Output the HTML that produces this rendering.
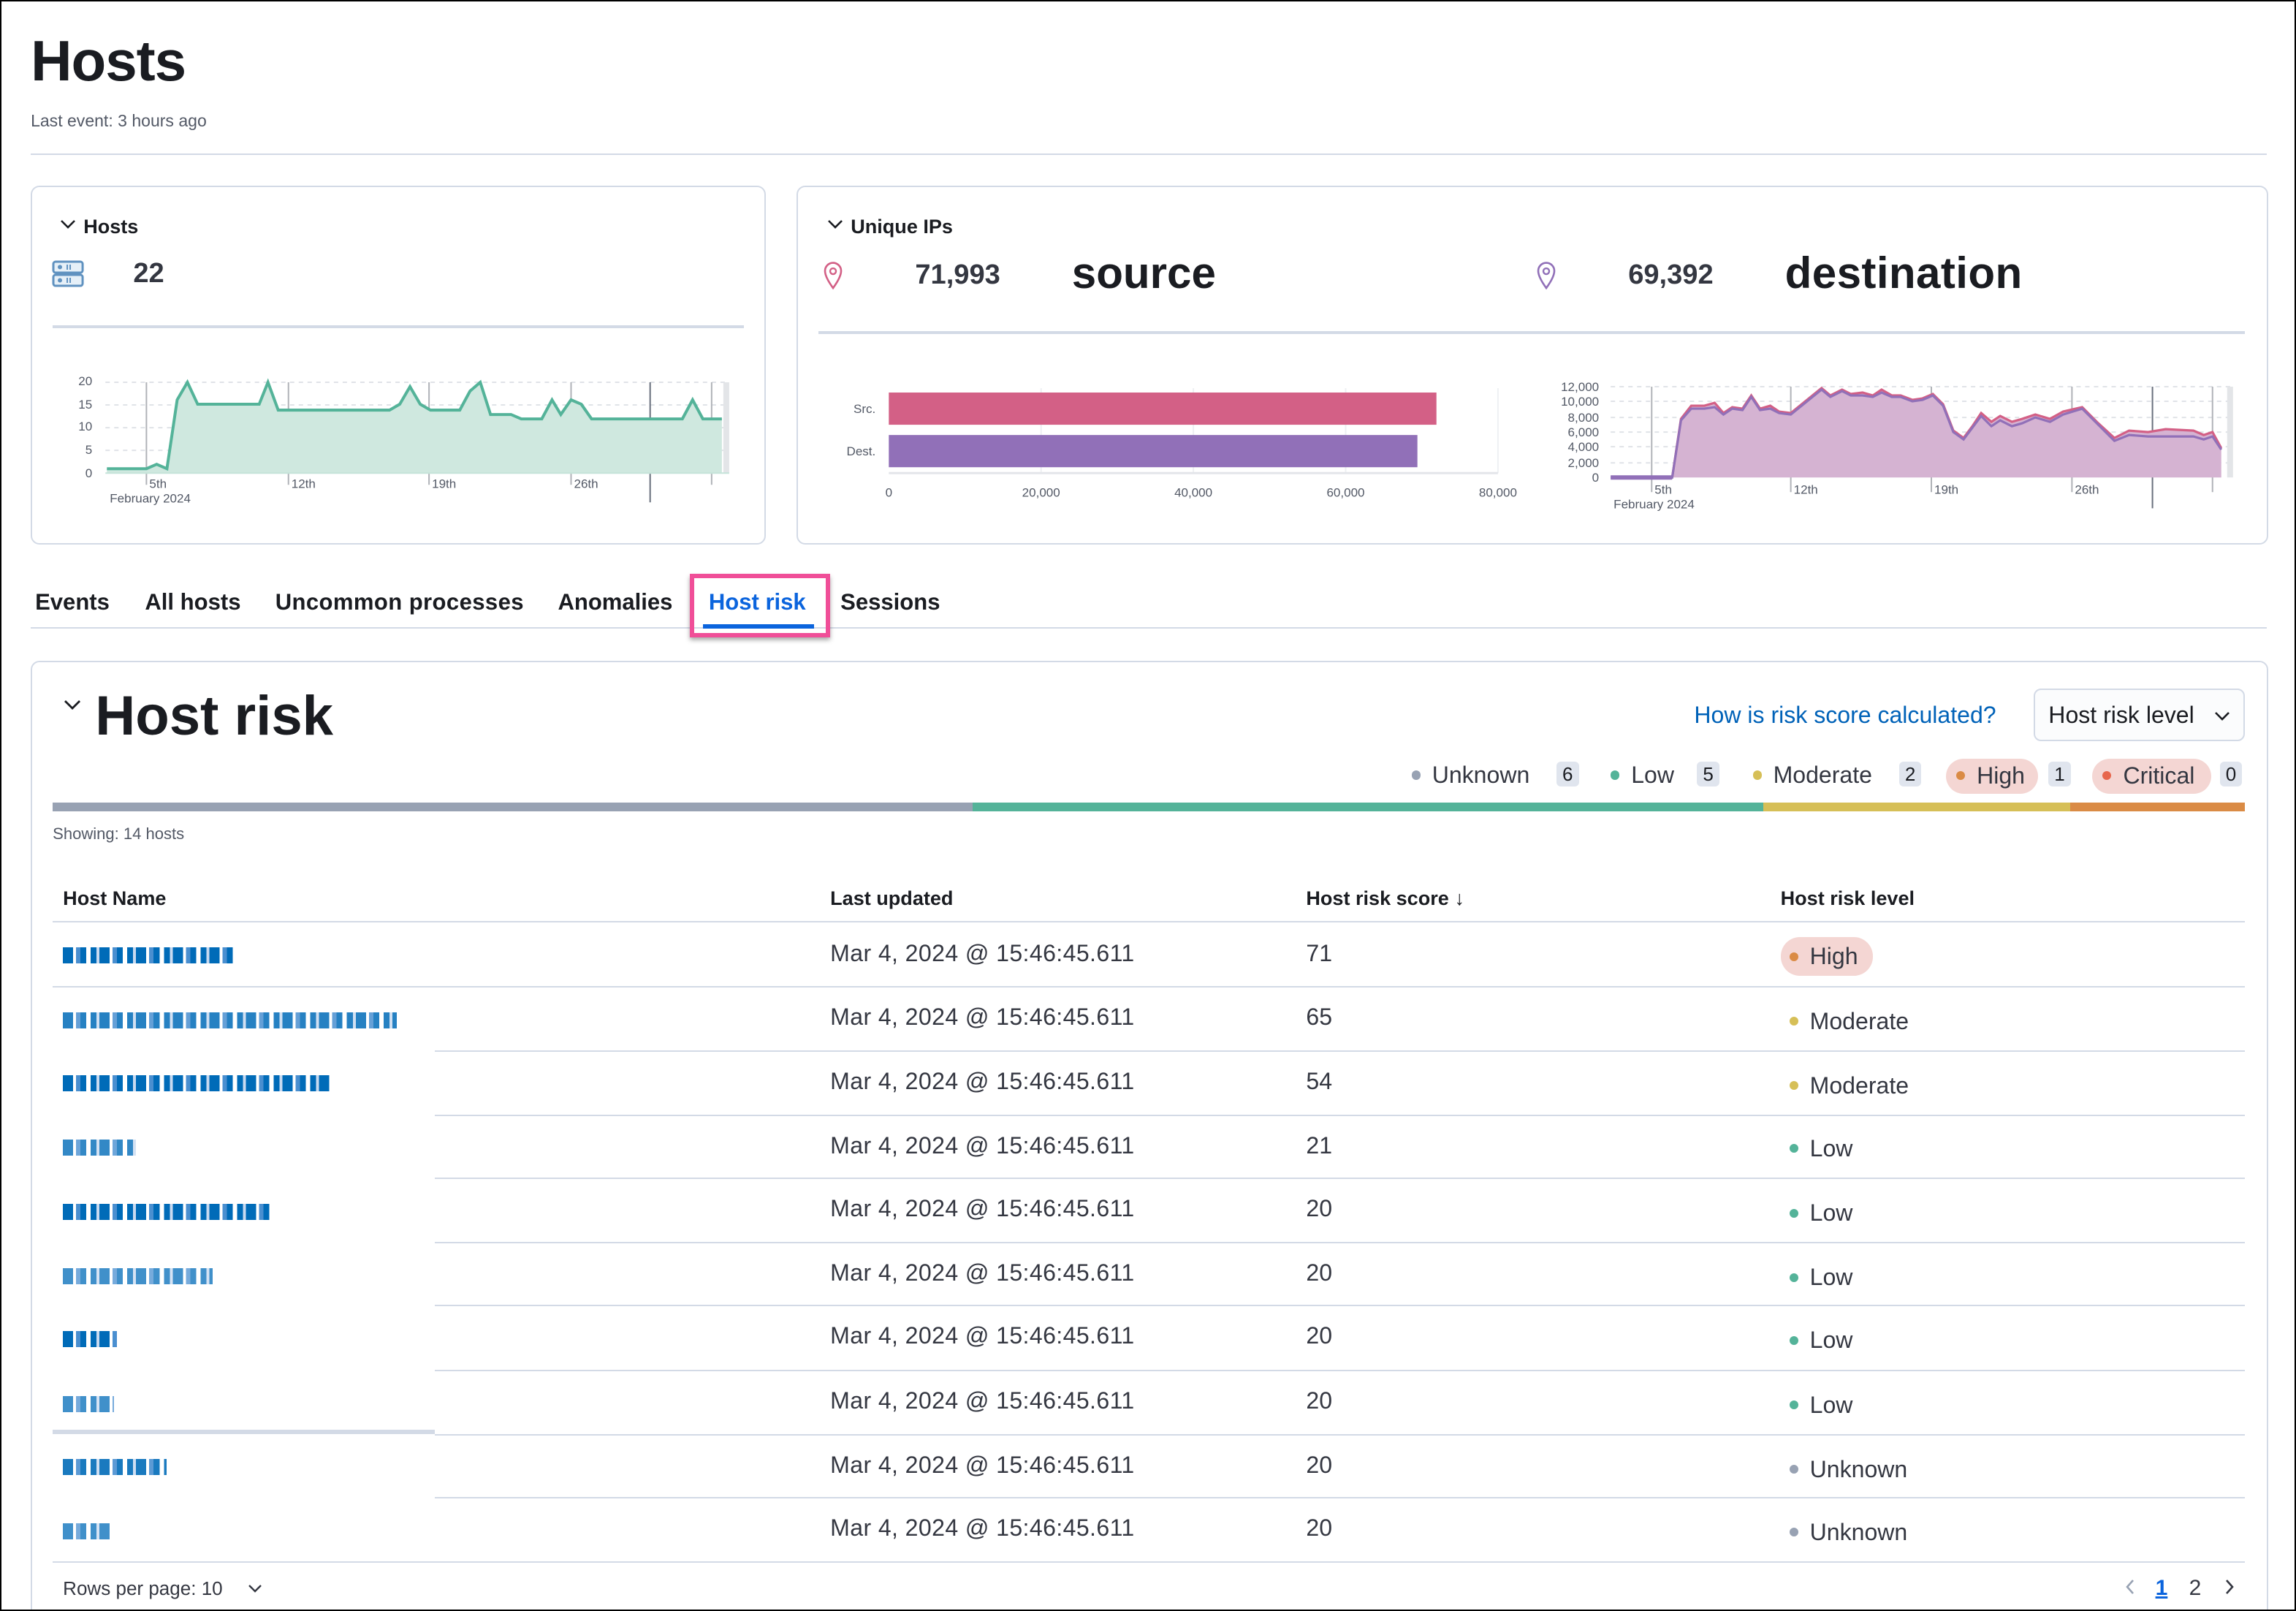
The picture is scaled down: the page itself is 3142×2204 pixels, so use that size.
<!DOCTYPE html>
<html><head><meta charset="utf-8"><style>
*{margin:0;padding:0;box-sizing:border-box}
html,body{width:3142px;height:2204px;overflow:hidden;background:#fff}
#w{position:absolute;left:0;top:0;width:1568px;height:1100px;zoom:2.0038;font-family:"Liberation Sans",sans-serif;color:#1a1c21;border:1px solid #000;background:#fff;overflow:hidden}
.a{position:absolute;white-space:nowrap}
.panel{position:absolute;border:1px solid #d3dae6;border-radius:6px;background:#fff}
.b{font-weight:bold}
.tab{position:absolute;top:401px;font-size:15.5px;font-weight:bold;color:#1a1c21}
.hl{position:absolute;height:1px;background:#d3dae6}
.dot{display:inline-block;width:6px;height:6px;border-radius:50%;margin-right:8px;vertical-align:middle;position:relative;top:-1px}
.badge{position:absolute;top:519px;height:17px;background:#e0e5ee;border-radius:3px;font-size:13px;text-align:center;line-height:17px;padding:0 4px}
.name{position:absolute;left:42px;height:11px;background:repeating-linear-gradient(90deg,#006bb8 0 7px,#fff 7px 9px,#4a8fd0 9px 12px,#006bb8 12px 16px,#fff 16px 19px,#006bb8 19px 23px,#c9daf0 23px 25px)}
</style></head><body><div id="w">
<div class="a b" style="left:20px;top:18px;font-size:39px;letter-spacing:-0.5px">Hosts</div>
<div class="a" style="left:20px;top:75px;font-size:11.5px;color:#535966">Last event: 3 hours ago</div>
<div class="hl" style="left:20px;top:104px;width:1527px"></div>

<div class="panel" style="left:20px;top:126px;width:502px;height:245px"></div>
<svg class="a" style="left:40px;top:148px" width="11" height="8" viewBox="0 0 11 8"><path d="M1 1.5L5.5 6L10 1.5" fill="none" stroke="#1a1c21" stroke-width="1.3"/></svg>
<div class="a b" style="left:56px;top:146px;font-size:13.5px">Hosts</div>
<svg class="a" style="left:34px;top:176px" width="24" height="20" viewBox="0 0 24 20"><rect x="1.5" y="1.5" width="20" height="7.5" rx="1.5" fill="#e6f0f8" stroke="#6092c0" stroke-width="1.5"/><rect x="1.5" y="10.5" width="20" height="7.5" rx="1.5" fill="#e6f0f8" stroke="#6092c0" stroke-width="1.5"/><circle cx="6" cy="5.2" r="1.5" fill="#6092c0"/><circle cx="6" cy="14.2" r="1.5" fill="#6092c0"/><path d="M11 3.5v3.5M13 3.5v3.5M11 12.5v3.5M13 12.5v3.5" stroke="#6092c0"/></svg>
<div class="a b" style="left:90px;top:175px;font-size:19px;color:#343741">22</div>
<div class="hl" style="left:35px;top:221px;width:472px;height:2px;background:#d3dae6"></div>
<svg class="a" style="left:0;top:0" width="1568" height="400">
<g stroke="#e0e3e8" stroke-dasharray="3 3" stroke-width="1"><path d="M71 260H497M71 275.5H497M71 291H497M71 306.5H497"/></g>
<g stroke="#b0b3b8"><path d="M99 260V330M196 260V330M292 260V330M389 260V330M485 260V330"/></g>
<path d="M443 260V342" stroke="#69707d"/>
<rect x="493" y="260" width="4" height="62" fill="#e3e5e8"/>
<path d="M72 319L99 319L106 316L113 319L120 272L127 260L134 275L176 275L182 260L189 279L265 279L272 275L279 263L286 275L293 279L313 279L320 266L327 260L334 282L348 282L355 285L369 285L376 272L382 282L389 272L396 275L403 285L465 285L472 272L479 285L492 285L492 322L72 322Z" fill="#cfe8df"/>
<path d="M72 319L99 319L106 316L113 319L120 272L127 260L134 275L176 275L182 260L189 279L265 279L272 275L279 263L286 275L293 279L313 279L320 266L327 260L334 282L348 282L355 285L369 285L376 272L382 282L389 272L396 275L403 285L465 285L472 272L479 285L492 285" fill="none" stroke="#54b399" stroke-width="2"/>
<path d="M71 322H497" stroke="#c5e3d9"/>
<g font-size="8.5" fill="#535966" font-family="Liberation Sans"><text x="62" y="262" text-anchor="end">20</text><text x="62" y="278" text-anchor="end">15</text><text x="62" y="293" text-anchor="end">10</text><text x="62" y="309" text-anchor="end">5</text><text x="62" y="325" text-anchor="end">0</text>
<text x="101" y="332">5th</text><text x="74" y="342">February 2024</text><text x="198" y="332">12th</text><text x="294" y="332">19th</text><text x="391" y="332">26th</text></g>

<g stroke="#eef0f3"><path d="M710 264V322M814 264V322M918 264V322M1022 264V322"/></g>
<path d="M606 322H1022" stroke="#e3e5ea" stroke-width="1.5"/>
<rect x="606" y="267" width="374" height="22" fill="#d36086"/>
<rect x="606" y="296" width="361" height="22" fill="#9170b8"/>
<g font-size="8.5" fill="#535966" font-family="Liberation Sans"><text x="597" y="281" text-anchor="end">Src.</text><text x="597" y="310" text-anchor="end">Dest.</text>
<text x="606" y="338" text-anchor="middle">0</text><text x="710" y="338" text-anchor="middle">20,000</text><text x="814" y="338" text-anchor="middle">40,000</text><text x="918" y="338" text-anchor="middle">60,000</text><text x="1022" y="338" text-anchor="middle">80,000</text></g>

<g stroke="#e0e3e8" stroke-dasharray="3 3"><path d="M1099 263H1524M1099 273H1524M1099 284H1524M1099 294H1524M1099 304H1524M1099 315H1524"/></g>
<g stroke="#b0b3b8"><path d="M1127 263V335M1222 263V335M1318 263V335M1414 263V335M1510 263V335"/></g>
<path d="M1469 263V346" stroke="#69707d"/>
<rect x="1520" y="263" width="4" height="62" fill="#e3e5e8"/>
<path d="M1099 325L1141 325L1147 285L1154 276L1163 276L1170 274L1176 281L1182 277L1189 278L1195 269L1201 278L1208 276L1214 280L1222 281L1243 264L1249 269L1257 265L1263 268L1271 267L1278 269L1284 265L1291 269L1297 269L1305 272L1312 271L1319 268L1326 275L1333 293L1340 298L1346 290L1352 281L1359 287L1365 283L1373 287L1380 285L1389 282L1399 285L1408 280L1421 277L1432 288L1443 298L1453 293L1466 294L1478 292L1497 293L1504 296L1510 294L1516 305L1516 325Z" fill="#d5b3d2"/>
<path d="M1141 325L1147 285L1154 276L1163 276L1170 274L1176 281L1182 277L1189 278L1195 269L1201 278L1208 276L1214 280L1222 281L1243 264L1249 269L1257 265L1263 268L1271 267L1278 269L1284 265L1291 269L1297 269L1305 272L1312 271L1319 268L1326 275L1333 293L1340 298L1346 290L1352 281L1359 287L1365 283L1373 287L1380 285L1389 282L1399 285L1408 280L1421 277L1432 288L1443 298L1453 293L1466 294L1478 292L1497 293L1504 296L1510 294L1516 305" fill="none" stroke="#d36086" stroke-width="1.6"/>
<path d="M1099 325L1141 325L1147 286L1154 278L1163 278L1170 277L1176 282L1182 278L1189 279L1195 270L1201 279L1208 278L1214 281L1222 282L1243 265L1249 270L1257 266L1263 269L1271 269L1278 270L1284 267L1291 270L1297 270L1305 273L1312 272L1319 269L1326 276L1333 294L1340 299L1346 291L1352 283L1359 290L1365 286L1373 290L1380 288L1389 284L1399 287L1408 282L1421 278L1432 289L1443 300L1453 296L1466 297L1478 297L1497 297L1504 299L1510 297L1516 306" fill="none" stroke="#9170b8" stroke-width="1.6"/>
<path d="M1099 325H1141" stroke="#9170b8" stroke-width="3"/>
<g font-size="8.5" fill="#535966" font-family="Liberation Sans"><text x="1091" y="266" text-anchor="end">12,000</text><text x="1091" y="276" text-anchor="end">10,000</text><text x="1091" y="287" text-anchor="end">8,000</text><text x="1091" y="297" text-anchor="end">6,000</text><text x="1091" y="307" text-anchor="end">4,000</text><text x="1091" y="318" text-anchor="end">2,000</text><text x="1091" y="328" text-anchor="end">0</text>
<text x="1129" y="336">5th</text><text x="1101" y="346">February 2024</text><text x="1224" y="336">12th</text><text x="1320" y="336">19th</text><text x="1416" y="336">26th</text></g>
</svg>

<div class="panel" style="left:543px;top:126px;width:1005px;height:245px;background:transparent"></div>
<svg class="a" style="left:564px;top:148px" width="11" height="8" viewBox="0 0 11 8"><path d="M1 1.5L5.5 6L10 1.5" fill="none" stroke="#1a1c21" stroke-width="1.3"/></svg>
<div class="a b" style="left:580px;top:146px;font-size:13.5px">Unique IPs</div>
<svg class="a" style="left:561px;top:177px" width="14" height="20" viewBox="0 0 14 20"><path d="M7 18.5C3 13 1.5 9.5 1.5 6.8A5.5 5.5 0 0 1 12.5 6.8C12.5 9.5 11 13 7 18.5Z" fill="none" stroke="#d36086" stroke-width="1.3"/><circle cx="7" cy="7" r="2" fill="none" stroke="#d36086" stroke-width="1.2"/></svg>
<div class="a b" style="left:624px;top:176px;font-size:19px;color:#343741">71,993</div>
<div class="a b" style="left:731px;top:168px;font-size:30px">source</div>
<svg class="a" style="left:1048px;top:177px" width="14" height="20" viewBox="0 0 14 20"><path d="M7 18.5C3 13 1.5 9.5 1.5 6.8A5.5 5.5 0 0 1 12.5 6.8C12.5 9.5 11 13 7 18.5Z" fill="none" stroke="#9170b8" stroke-width="1.3"/><circle cx="7" cy="7" r="2" fill="none" stroke="#9170b8" stroke-width="1.2"/></svg>
<div class="a b" style="left:1111px;top:176px;font-size:19px;color:#343741">69,392</div>
<div class="a b" style="left:1218px;top:168px;font-size:30px;letter-spacing:0.2px">destination</div>
<div class="hl" style="left:558px;top:225px;width:974px;height:2px"></div>

<div class="tab" style="left:23px">Events</div>
<div class="tab" style="left:98px">All hosts</div>
<div class="tab" style="left:187px;letter-spacing:0.2px">Uncommon processes</div>
<div class="tab" style="left:380px">Anomalies</div>
<div class="tab" style="left:483px;color:#0b64dd">Host risk</div>
<div class="tab" style="left:573px">Sessions</div>
<div class="hl" style="left:20px;top:427px;width:1527px;height:1px"></div>
<div class="a" style="left:470px;top:391px;width:96px;height:43px;border:3px solid #f04e98;box-shadow:0 2px 3px rgba(0,0,0,.35)"></div>
<div class="a" style="left:479px;top:425px;width:76px;height:3px;background:#0b64dd"></div>

<div class="panel" style="left:20px;top:450px;width:1528px;height:680px"></div>
<svg class="a" style="left:42px;top:476px" width="13" height="9" viewBox="0 0 13 9"><path d="M1.5 1.5L6.5 6.5L11.5 1.5" fill="none" stroke="#1a1c21" stroke-width="1.4"/></svg>
<div class="a b" style="left:64px;top:466px;font-size:38px">Host risk</div>
<div class="a" style="left:1156px;top:478px;font-size:16px;color:#0062b8">How is risk score calculated?</div>
<div class="a" style="left:1388px;top:469px;width:144px;height:36px;border:1px solid #d3dae6;border-radius:5px;background:#fbfcfd;font-size:16px;line-height:34px;padding-left:9px">Host risk level<svg style="position:absolute;right:9px;top:14px" width="11" height="8" viewBox="0 0 11 8"><path d="M1 1.5L5.5 6L10 1.5" fill="none" stroke="#1a1c21" stroke-width="1.3"/></svg></div>

<div class="a" style="left:963px;top:519px;font-size:16px;color:#343741"><span class="dot" style="background:#98a2b3"></span>Unknown</div>
<div class="badge" style="left:1062px">6</div>
<div class="a" style="left:1099px;top:519px;font-size:16px;color:#343741"><span class="dot" style="background:#54b399"></span>Low</div>
<div class="badge" style="left:1158px">5</div>
<div class="a" style="left:1196px;top:519px;font-size:16px;color:#343741"><span class="dot" style="background:#d6bf57"></span>Moderate</div>
<div class="badge" style="left:1296px">2</div>
<div class="a" style="left:1328px;top:517px;height:24px;width:63px;border-radius:12px;background:#f4d6d3;font-size:16px;color:#343741;line-height:23px;padding-left:7px"><span class="dot" style="background:#da8b45"></span>High</div>
<div class="badge" style="left:1398px">1</div>
<div class="a" style="left:1428px;top:517px;height:24px;width:81px;border-radius:12px;background:#f4d6d3;font-size:16px;color:#343741;line-height:23px;padding-left:7px"><span class="dot" style="background:#e7664c"></span>Critical</div>
<div class="badge" style="left:1515px">0</div>

<div class="a" style="left:35px;top:547px;width:628px;height:6px;background:#98a2b3"></div>
<div class="a" style="left:663px;top:547px;width:540px;height:6px;background:#54b399"></div>
<div class="a" style="left:1203px;top:547px;width:210px;height:6px;background:#d6bf57"></div>
<div class="a" style="left:1413px;top:547px;width:119px;height:6px;background:#da8b45"></div>
<div class="a" style="left:35px;top:562px;font-size:11px;color:#535966">Showing: 14 hosts</div>

<div class="a b" style="left:42px;top:605px;font-size:13.5px">Host Name</div>
<div class="a b" style="left:566px;top:605px;font-size:13.5px">Last updated</div>
<div class="a b" style="left:891px;top:605px;font-size:13.5px">Host risk score &#8595;</div>
<div class="a b" style="left:1215px;top:605px;font-size:13.5px">Host risk level</div>
<div class="hl" style="left:35px;top:628px;width:1497px"></div>

<div class="name" style="top:646px;width:117px"></div>
<div class="name" style="top:690px;width:228px;opacity:.85"></div>
<div class="name" style="top:733px;width:183px"></div>
<div class="name" style="top:777px;width:50px;opacity:.8"></div>
<div class="name" style="top:821px;width:141px"></div>
<div class="name" style="top:865px;width:102px;opacity:.75"></div>
<div class="name" style="top:908px;width:37px"></div>
<div class="name" style="top:952px;width:35px;opacity:.75"></div>
<div class="name" style="top:995px;width:71px;opacity:.9"></div>
<div class="name" style="top:1039px;width:32px;opacity:.75"></div>
<div class="a" style="left:35px;top:975px;width:261px;height:3px;background:#d3dae6"></div>

<div class="hl" style="left:35px;top:672px;width:1497px"></div>
<div class="hl" style="left:296px;top:716px;width:1236px"></div>
<div class="hl" style="left:296px;top:760px;width:1236px"></div>
<div class="hl" style="left:296px;top:803px;width:1236px"></div>
<div class="hl" style="left:296px;top:847px;width:1236px"></div>
<div class="hl" style="left:296px;top:890px;width:1236px"></div>
<div class="hl" style="left:296px;top:934px;width:1236px"></div>
<div class="hl" style="left:296px;top:978px;width:1236px"></div>
<div class="hl" style="left:296px;top:1021px;width:1236px"></div>
<div class="hl" style="left:35px;top:1065px;width:1497px"></div>

<div style="position:absolute;left:0;top:0;font-size:16px;color:#343741">
<div class="a" style="left:566px;top:641px;letter-spacing:0.2px">Mar 4, 2024 @ 15:46:45.611</div><div class="a" style="left:891px;top:641px">71</div>
<div class="a" style="left:566px;top:684px;letter-spacing:0.2px">Mar 4, 2024 @ 15:46:45.611</div><div class="a" style="left:891px;top:684px">65</div>
<div class="a" style="left:566px;top:728px;letter-spacing:0.2px">Mar 4, 2024 @ 15:46:45.611</div><div class="a" style="left:891px;top:728px">54</div>
<div class="a" style="left:566px;top:772px;letter-spacing:0.2px">Mar 4, 2024 @ 15:46:45.611</div><div class="a" style="left:891px;top:772px">21</div>
<div class="a" style="left:566px;top:815px;letter-spacing:0.2px">Mar 4, 2024 @ 15:46:45.611</div><div class="a" style="left:891px;top:815px">20</div>
<div class="a" style="left:566px;top:859px;letter-spacing:0.2px">Mar 4, 2024 @ 15:46:45.611</div><div class="a" style="left:891px;top:859px">20</div>
<div class="a" style="left:566px;top:902px;letter-spacing:0.2px">Mar 4, 2024 @ 15:46:45.611</div><div class="a" style="left:891px;top:902px">20</div>
<div class="a" style="left:566px;top:946px;letter-spacing:0.2px">Mar 4, 2024 @ 15:46:45.611</div><div class="a" style="left:891px;top:946px">20</div>
<div class="a" style="left:566px;top:990px;letter-spacing:0.2px">Mar 4, 2024 @ 15:46:45.611</div><div class="a" style="left:891px;top:990px">20</div>
<div class="a" style="left:566px;top:1033px;letter-spacing:0.2px">Mar 4, 2024 @ 15:46:45.611</div><div class="a" style="left:891px;top:1033px">20</div>

<div class="a" style="left:1215px;top:639px;height:26px;width:63px;border-radius:13px;background:#f4d6d3;line-height:26px;padding-left:6px"><span class="dot" style="background:#da8b45"></span>High</div>
<div class="a" style="left:1221px;top:687px"><span class="dot" style="background:#d6bf57"></span>Moderate</div>
<div class="a" style="left:1221px;top:731px"><span class="dot" style="background:#d6bf57"></span>Moderate</div>
<div class="a" style="left:1221px;top:774px"><span class="dot" style="background:#54b399"></span>Low</div>
<div class="a" style="left:1221px;top:818px"><span class="dot" style="background:#54b399"></span>Low</div>
<div class="a" style="left:1221px;top:862px"><span class="dot" style="background:#54b399"></span>Low</div>
<div class="a" style="left:1221px;top:905px"><span class="dot" style="background:#54b399"></span>Low</div>
<div class="a" style="left:1221px;top:949px"><span class="dot" style="background:#54b399"></span>Low</div>
<div class="a" style="left:1221px;top:993px"><span class="dot" style="background:#98a2b3"></span>Unknown</div>
<div class="a" style="left:1221px;top:1036px"><span class="dot" style="background:#98a2b3"></span>Unknown</div>
</div>

<div class="a" style="left:42px;top:1076px;font-size:13px;color:#343741">Rows per page: 10</div>
<svg class="a" style="left:168px;top:1080px" width="10" height="7" viewBox="0 0 10 7"><path d="M1 1.5L5 5.5L9 1.5" fill="none" stroke="#343741" stroke-width="1.2"/></svg>
<svg class="a" style="left:1450px;top:1077px" width="7" height="11" viewBox="0 0 7 11"><path d="M5.5 1L1.5 5.5L5.5 10" fill="none" stroke="#98a2b3" stroke-width="1.3"/></svg>
<div class="a" style="left:1471px;top:1075px;font-size:15px;color:#0b64dd;text-decoration:underline;font-weight:bold">1</div>
<div class="a" style="left:1494px;top:1075px;font-size:15px;color:#343741">2</div>
<svg class="a" style="left:1518px;top:1077px" width="7" height="11" viewBox="0 0 7 11"><path d="M1.5 1L5.5 5.5L1.5 10" fill="none" stroke="#343741" stroke-width="1.3"/></svg>
</div></body></html>
